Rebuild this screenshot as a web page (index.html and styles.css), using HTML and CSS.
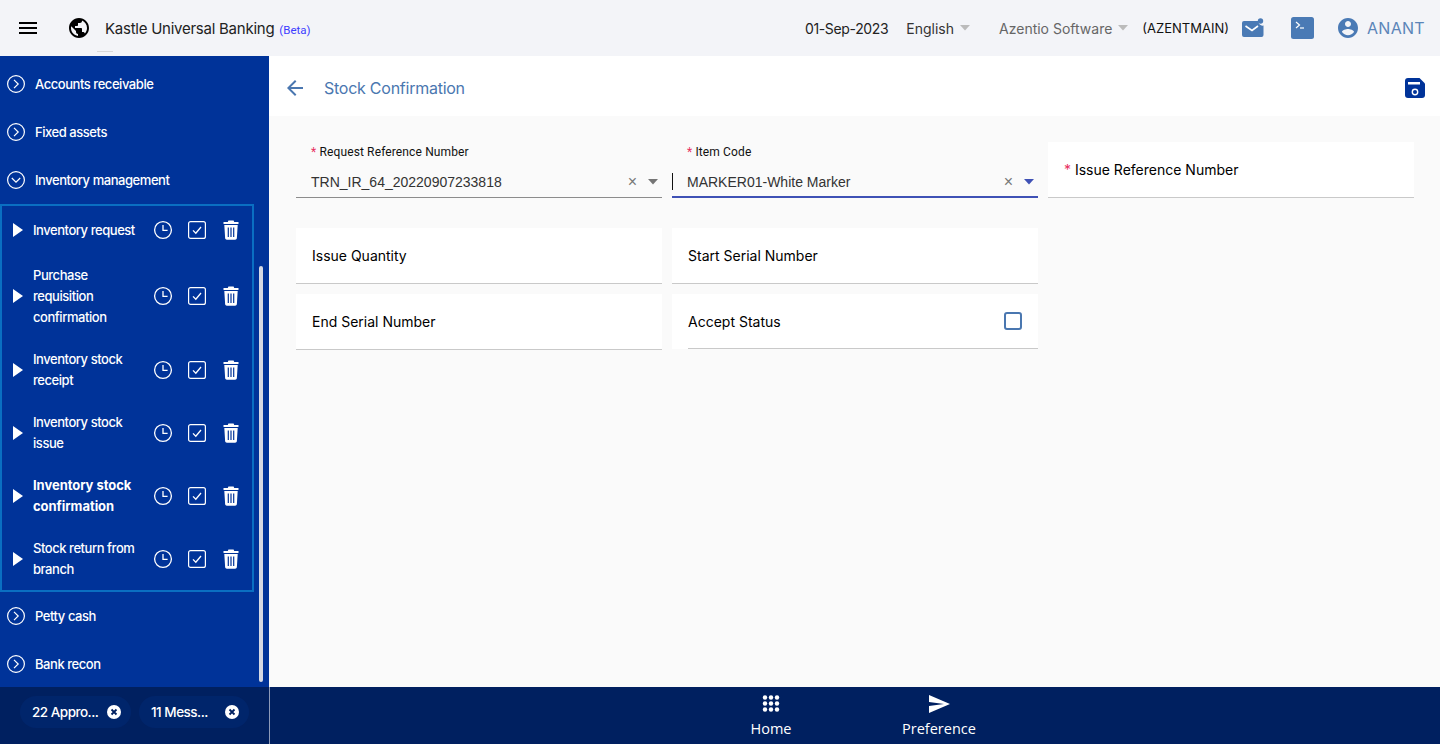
FILE: index.html
```html
<!DOCTYPE html>
<html lang="en">
<head>
    <meta charset="UTF-8">
    <meta name="viewport" content="width=device-width, initial-scale=1.0">
    <title>Stock Confirmation</title>
    <link rel="stylesheet" href="styles.css">
</head>
<body>

<svg class="sprite" xmlns="http://www.w3.org/2000/svg">
    <symbol id="i-closed" viewBox="0 0 20 20">
        <circle cx="10" cy="10" r="8.4" fill="none" stroke="currentColor" stroke-width="1.2"/>
        <path d="M8 5.8l4.2 4.2L8 14.2" fill="none" stroke="currentColor" stroke-width="1.2"/>
    </symbol>
    <symbol id="i-open" viewBox="0 0 20 20">
        <circle cx="10" cy="10" r="8.4" fill="none" stroke="currentColor" stroke-width="1.2"/>
        <path d="M5.8 8l4.2 4.2L14.2 8" fill="none" stroke="currentColor" stroke-width="1.2"/>
    </symbol>
    <symbol id="i-clock" viewBox="0 0 20 20">
        <circle cx="10" cy="10" r="8.4" fill="none" stroke="currentColor" stroke-width="1.3"/>
        <path d="M10 5v5.4h4.6" fill="none" stroke="currentColor" stroke-width="1.3"/>
    </symbol>
    <symbol id="i-check" viewBox="0 0 20 20">
        <rect x="1.6" y="1.6" width="16.8" height="16.8" rx="2" fill="none" stroke="currentColor" stroke-width="1.2"/>
        <path d="M6 10.4l2.8 2.8L14 7" fill="none" stroke="currentColor" stroke-width="1.3"/>
    </symbol>
    <symbol id="i-trash" viewBox="0 0 20 20">
        <path d="M7.4 0.5h5.2l.6 1.4h4.3v2.100H2.500V1.900h4.300z" fill="currentColor"/>
        <path d="M3.300 5h13.400l-.8 13c-.1 1-.8 1.700-1.800 1.700H5.900c-1 0-1.700-.7-1.800-1.700z" fill="currentColor"/>
        <path d="M7.300 7.500v9.500M10 7.500v9.500M12.700 7.500v9.500" stroke="#003399" stroke-width="1.200"/>
    </symbol>
    <symbol id="i-caret" viewBox="0 0 10 6">
        <path d="M0 0h10L5 5.500z" fill="currentColor"/>
    </symbol>
</svg>

<div class="app">
    <header class="topbar">
        <svg class="menu-icon" width="24" height="24" viewBox="0 0 24 24"><path d="M3 18h18v-2H3v2zm0-5h18v-2H3v2zm0-7v2h18V6H3z"/></svg>
        <svg class="globe-icon" width="24" height="24" viewBox="0 0 24 24"><path d="M12 2C6.480 2 2 6.480 2 12s4.480 10 10 10 10-4.480 10-10S17.520 2 12 2zm-1 17.930c-3.950-.49-7-3.850-7-7.930 0-.62.080-1.210.210-1.790L9 15v1c0 1.100.9 2 2 2v1.930zm6.900-2.540c-.26-.81-1-1.390-1.900-1.390h-1v-3c0-.55-.45-1-1-1H8v-2h2c.55 0 1-.45 1-1V7h2c1.100 0 2-.9 2-2v-.41c2.930 1.190 5 4.060 5 7.410 0 2.080-.8 3.970-2.100 5.390z"/></svg>
        <span class="brand">Kastle Universal Banking</span>
        <span class="beta">(Beta)</span>
        <span class="tick"></span>

        <div class="topbar-right">
            <span class="date">01-Sep-2023</span>
            <span class="lang">English</span>
            <svg class="caret grey" width="10" height="6"><use href="#i-caret"/></svg>
            <span class="company">Azentio Software</span>
            <svg class="caret grey" width="10" height="6"><use href="#i-caret"/></svg>
            <span class="branch">(AZENTMAIN)</span>
            <svg class="mail-icon" width="22" height="20" viewBox="0 0 22 20">
                <path d="M2 3h14.500a4 4 0 0 0 5 4.500V17a2 2 0 0 1-2 2H2a2 2 0 0 1-2-2V5a2 2 0 0 1 2-2z" fill="#4a7ab5"/>
                <circle cx="18.500" cy="3" r="2.700" fill="#4a7ab5"/>
                <path d="M3.500 8l6.500 4.500L16 8" fill="none" stroke="#fff" stroke-width="1.600"/>
            </svg>
            <svg class="term-icon" width="23" height="22" viewBox="0 0 23 22">
                <rect width="23" height="22" rx="2.500" fill="#4a7ab5"/>
                <path d="M5 5l3.500 3L5 11" fill="none" stroke="#fff" stroke-width="1.200"/>
                <path d="M9 11h4" stroke="#fff" stroke-width="1.200"/>
            </svg>
            <svg class="user-icon" width="24" height="24" viewBox="0 0 24 24"><path d="M12 2C6.480 2 2 6.480 2 12s4.480 10 10 10 10-4.480 10-10S17.520 2 12 2zm0 3c1.660 0 3 1.340 3 3s-1.340 3-3 3-3-1.340-3-3 1.340-3 3-3zm0 14.200c-2.500 0-4.710-1.280-6-3.220.03-1.990 4-3.080 6-3.080 1.990 0 5.970 1.090 6 3.080-1.290 1.940-3.500 3.220-6 3.220z"/></svg>
            <span class="user-name">ANANT</span>
        </div>
    </header>

    <div class="middle">
        <nav class="sidebar">
            <a class="nav-item"><svg width="20" height="20"><use href="#i-closed"/></svg>Accounts receivable</a>
            <a class="nav-item"><svg width="20" height="20"><use href="#i-closed"/></svg>Fixed assets</a>
            <a class="nav-item"><svg width="20" height="20"><use href="#i-open"/></svg>Inventory management</a>

            <div class="sub-box">
                <div class="sub-row single">
                    <span class="arrow"></span>
                    <span class="sub-text">Inventory request</span>
                    <svg width="20" height="20"><use href="#i-clock"/></svg>
                    <svg width="20" height="20"><use href="#i-check"/></svg>
                    <svg width="20" height="20"><use href="#i-trash"/></svg>
                </div>
                <div class="sub-row triple">
                    <span class="arrow"></span>
                    <span class="sub-text">Purchase requisition confirmation</span>
                    <svg width="20" height="20"><use href="#i-clock"/></svg>
                    <svg width="20" height="20"><use href="#i-check"/></svg>
                    <svg width="20" height="20"><use href="#i-trash"/></svg>
                </div>
                <div class="sub-row">
                    <span class="arrow"></span>
                    <span class="sub-text">Inventory stock receipt</span>
                    <svg width="20" height="20"><use href="#i-clock"/></svg>
                    <svg width="20" height="20"><use href="#i-check"/></svg>
                    <svg width="20" height="20"><use href="#i-trash"/></svg>
                </div>
                <div class="sub-row">
                    <span class="arrow"></span>
                    <span class="sub-text">Inventory stock issue</span>
                    <svg width="20" height="20"><use href="#i-clock"/></svg>
                    <svg width="20" height="20"><use href="#i-check"/></svg>
                    <svg width="20" height="20"><use href="#i-trash"/></svg>
                </div>
                <div class="sub-row">
                    <span class="arrow"></span>
                    <span class="sub-text active">Inventory stock confirmation</span>
                    <svg width="20" height="20"><use href="#i-clock"/></svg>
                    <svg width="20" height="20"><use href="#i-check"/></svg>
                    <svg width="20" height="20"><use href="#i-trash"/></svg>
                </div>
                <div class="sub-row">
                    <span class="arrow"></span>
                    <span class="sub-text">Stock return from branch</span>
                    <svg width="20" height="20"><use href="#i-clock"/></svg>
                    <svg width="20" height="20"><use href="#i-check"/></svg>
                    <svg width="20" height="20"><use href="#i-trash"/></svg>
                </div>
            </div>

            <a class="nav-item"><svg width="20" height="20"><use href="#i-closed"/></svg>Petty cash</a>
            <a class="nav-item"><svg width="20" height="20"><use href="#i-closed"/></svg>Bank recon</a>
            <span class="scroll-thumb"></span>
        </nav>

        <main class="content">
            <div class="title-bar">
                <svg class="back-icon" width="24" height="24" viewBox="0 0 24 24"><path d="M20 11H7.830l5.590-5.590L12 4l-8 8 8 8 1.410-1.410L7.830 13H20v-2z"/></svg>
                <span class="page-title">Stock Confirmation</span>
                <svg class="save-icon" width="20" height="20" viewBox="0 0 20 20">
                    <path d="M3 0h11.500L20 5.500V17a3 3 0 0 1-3 3H3a3 3 0 0 1-3-3V3a3 3 0 0 1 3-3z" fill="#003399"/>
                    <rect x="3" y="4" width="12" height="2.500" fill="#fff"/>
                    <circle cx="10" cy="14" r="2.700" fill="none" stroke="#fff" stroke-width="1.400"/>
                </svg>
            </div>

            <form class="form-grid">
                <div class="select-field">
                    <label><b>*</b> Request Reference Number</label>
                    <div class="select-value">
                        <span class="value-text">TRN_IR_64_20220907233818</span>
                        <span class="clear-x">×</span>
                        <svg class="caret dark" width="10" height="6"><use href="#i-caret"/></svg>
                    </div>
                </div>
                <div class="select-field focused">
                    <label><b>*</b> Item Code</label>
                    <div class="select-value">
                        <span class="cursor"></span>
                        <span class="value-text">MARKER01-White Marker</span>
                        <span class="clear-x">×</span>
                        <svg class="caret indigo" width="10" height="6"><use href="#i-caret"/></svg>
                    </div>
                </div>
                <div class="text-field"><span><b>*</b> Issue Reference Number</span></div>

                <div class="text-field"><span>Issue Quantity</span></div>
                <div class="text-field"><span>Start Serial Number</span></div>
                <div class="empty-cell"></div>

                <div class="text-field"><span>End Serial Number</span></div>
                <div class="check-field">
                    <div class="check-inner">
                        <span>Accept Status</span>
                        <span class="check-box"></span>
                    </div>
                </div>
            </form>
        </main>
    </div>

    <footer class="bottom">
        <div class="chips">
            <div class="chip">
                <span>22 Appro...</span>
                <svg width="16" height="16" viewBox="0 0 16 16"><circle cx="8" cy="8" r="7" fill="#fff"/><path d="M5.500 5.500l5 5M10.500 5.500l-5 5" stroke="#002060" stroke-width="1.800"/></svg>
            </div>
            <div class="chip">
                <span>11 Mess...</span>
                <svg width="16" height="16" viewBox="0 0 16 16"><circle cx="8" cy="8" r="7" fill="#fff"/><path d="M5.500 5.500l5 5M10.500 5.500l-5 5" stroke="#002060" stroke-width="1.800"/></svg>
            </div>
        </div>
        <div class="dock">
            <a class="dock-item">
                <svg width="24" height="24" viewBox="0 0 24 24" fill="#fff">
                    <circle cx="6" cy="5.500" r="2.200"/><circle cx="12" cy="5.500" r="2.200"/><circle cx="18" cy="5.500" r="2.200"/>
                    <circle cx="6" cy="11.500" r="2.200"/><circle cx="12" cy="11.500" r="2.200"/><circle cx="18" cy="11.500" r="2.200"/>
                    <circle cx="6" cy="17.500" r="2.200"/><circle cx="12" cy="17.500" r="2.200"/><circle cx="18" cy="17.500" r="2.200"/>
                </svg>
                Home
            </a>
            <a class="dock-item">
                <svg width="24" height="24" viewBox="0 0 24 24" fill="#fff"><path d="M2.010 21L23 12 2.010 3 2 10l15 2-15 2z"/></svg>
                Preference
            </a>
        </div>
    </footer>
</div>

</body>
</html>
```

FILE: styles.css
```css
* {
    box-sizing: border-box;
}
body {
    margin: 0;
    font-family: Inter, "Noto Sans", sans-serif;
    background-color: #fafafa;
    color: #111;
}
.sprite {
    display: none;
}
.app {
    display: flex;
    flex-direction: column;
    height: 744px;
    overflow: hidden;
}

/* top bar */
.topbar {
    position: relative;
    display: flex;
    align-items: center;
    flex: 0 0 56px;
    background-color: #f3f4f8;
    padding-left: 16px;
}
.globe-icon {
    margin-left: 27px;
}
.brand {
    margin-left: 14px;
    font-size: 15px;
    letter-spacing: -0.25px;
    color: #222;
}
.beta {
    margin-left: 5px;
    margin-top: 3px;
    font-size: 11.5px;
    color: #3d3dff;
    font-family: Roboto, sans-serif;
}
.tick {
    position: absolute;
    left: 97px;
    top: 51px;
    width: 16px;
    height: 1px;
    background-color: #d8d8d8;
}
.topbar-right {
    display: flex;
    align-items: center;
    margin-left: auto;
    padding-right: 15px;
}
.date {
    font-size: 14px;
    letter-spacing: -0.35px;
    color: #222;
}
.lang {
    margin-left: 18px;
    font-size: 14px;
    color: #333;
}
.caret {
    flex: none;
}
.caret.grey {
    margin-left: 6px;
    color: #bbb;
}
.company {
    margin-left: 29px;
    font-size: 14px;
    color: #666;
}
.branch {
    margin-left: 14px;
    font-size: 13px;
    color: #111;
}
.mail-icon {
    margin-left: 13px;
}
.term-icon {
    margin-left: 27px;
}
.user-icon {
    margin-left: 22px;
    fill: #4a7ab5;
}
.user-name {
    margin-left: 7px;
    font-size: 16px;
    letter-spacing: 0.3px;
    color: #5b85b8;
}

/* sidebar */
.middle {
    display: flex;
    flex: 1;
    min-height: 0;
}
.sidebar {
    position: relative;
    flex: 0 0 269px;
    padding-top: 4px;
    background-color: #003399;
    color: #fff;
    overflow: hidden;
}
.nav-item {
    display: flex;
    align-items: center;
    height: 48px;
    padding-left: 6px;
    font-size: 13px;
    font-weight: 500;
    letter-spacing: -0.45px;
}
.nav-item svg {
    margin-right: 9px;
}
.sub-box {
    width: 254px;
    border: 2px solid #0a6fc2;
}
.sub-row {
    display: flex;
    align-items: center;
    min-height: 63px;
    padding-left: 11px;
    font-size: 13px;
    font-weight: 500;
    line-height: 21px;
    letter-spacing: -0.45px;
}
.sub-row.single {
    min-height: 47px;
}
.sub-row.triple {
    min-height: 85px;
}
.sub-row.single .sub-text,
.sub-row.triple .sub-text {
    margin-top: 2px;
}
.arrow {
    flex: none;
    width: 0;
    height: 0;
    border-left: 10px solid #fff;
    border-top: 7px solid transparent;
    border-bottom: 7px solid transparent;
}
.sub-text {
    flex: 0 0 108px;
    margin-left: 10px;
}
.sub-text.active {
    font-weight: 700;
    letter-spacing: -0.05px;
}
.sub-row svg {
    flex: none;
    margin-left: 14px;
}
.sub-row .sub-text + svg {
    margin-left: 12px;
}
.scroll-thumb {
    position: absolute;
    left: 259px;
    top: 210px;
    width: 4px;
    height: 416px;
    border-radius: 2px;
    background-color: #d5d9e4;
}

/* main form */
.content {
    flex: 1;
    min-width: 0;
}
.title-bar {
    display: flex;
    align-items: center;
    height: 60px;
    padding: 4px 15px 0 14px;
    background-color: #fff;
}
.back-icon {
    fill: #4a77b0;
}
.page-title {
    margin-left: 17px;
    font-size: 16px;
    letter-spacing: -0.25px;
    color: #4a77b0;
}
.save-icon {
    margin-left: auto;
}
.form-grid {
    display: grid;
    grid-template-columns: repeat(3, 366px);
    grid-template-rows: 86px 66px 56px;
    column-gap: 10px;
    padding: 26px 0 0 27px;
}
.select-field {
    display: flex;
    flex-direction: column;
    justify-content: flex-end;
    height: 56px;
    border-bottom: 1px solid #8c8c8c;
}
.select-field.focused {
    border-bottom-color: #3f51b5;
    box-shadow: inset 0 -1px 0 #3f51b5;
}
.select-field label {
    padding-left: 15px;
    font-family: Roboto, sans-serif;
    font-size: 12px;
    line-height: 14px;
    letter-spacing: 0.13px;
    color: #111;
}
b {
    font-weight: 400;
    color: #e8305f;
}
.select-value {
    position: relative;
    display: flex;
    align-items: center;
    height: 30px;
    padding: 0 4px 0 15px;
    margin-top: 8px;
    font-family: "Liberation Sans", Arial, sans-serif;
    font-size: 14px;
    color: #333;
}
.value-text {
    flex: 1;
}
.clear-x {
    margin-right: 11px;
    font-size: 16px;
    color: #777;
}
.caret.dark {
    color: #757575;
}
.caret.indigo {
    color: #3f51b5;
}
.cursor {
    position: absolute;
    left: 0;
    top: 6px;
    width: 1px;
    height: 17px;
    background-color: #111;
}
.text-field {
    display: flex;
    align-items: center;
    height: 56px;
    padding-left: 16px;
    background-color: #fff;
    border-bottom: 1px solid #c9c9c9;
    font-size: 14px;
    color: #000;
}
.check-field {
    height: 55px;
    background-color: #fff;
    padding-left: 16px;
    font-size: 14px;
    color: #000;
}
.check-inner {
    display: flex;
    align-items: center;
    justify-content: space-between;
    height: 55px;
    padding-right: 16px;
    border-bottom: 1px solid #c9c9c9;
}
.check-box {
    width: 18px;
    height: 18px;
    border: 2px solid #4a77b0;
    border-radius: 3px;
}

/* bottom bar */
.bottom {
    display: flex;
    flex: 0 0 57px;
    background-color: #002060;
    color: #fff;
}
.chips {
    display: flex;
    align-items: flex-start;
    flex: 0 0 269px;
    gap: 8px;
    padding: 9px 0 0 20px;
}
.chip {
    display: flex;
    align-items: center;
    justify-content: space-between;
    width: 111px;
    height: 32px;
    padding: 0 9px 0 12px;
    border-radius: 16px;
    background-color: #00256b;
    font-size: 13.5px;
    font-weight: 500;
    letter-spacing: -0.5px;
}
.chip + .chip {
    width: 110px;
}
.dock {
    display: flex;
    justify-content: center;
    flex: 1;
    border-left: 1px solid #8d9ab8;
}
.dock-item {
    display: flex;
    flex-direction: column;
    align-items: center;
    gap: 3px;
    width: 168px;
    padding-top: 5px;
    font-family: "Open Sans", sans-serif;
    font-size: 14.5px;
    line-height: 20px;
}
```
